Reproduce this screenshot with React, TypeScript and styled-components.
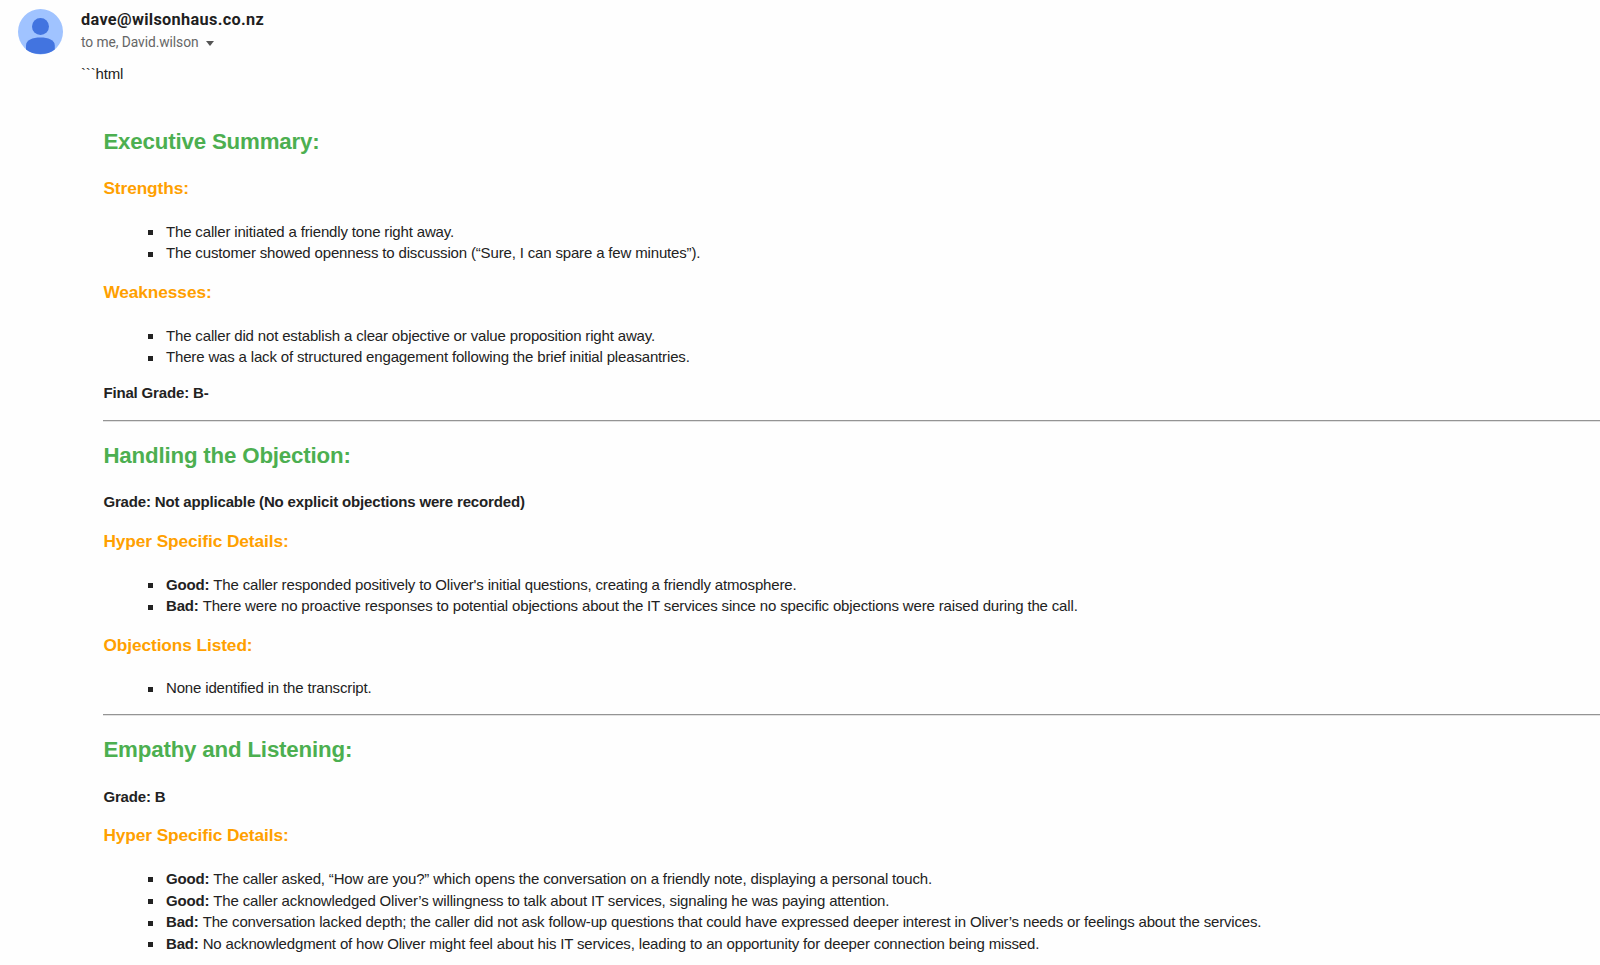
import React from 'react';
import styled, { createGlobalStyle } from 'styled-components';

const GlobalStyle = createGlobalStyle`
  * {
    box-sizing: border-box;
  }

  body {
    margin: 0;
    background: #fefefe;
    overflow: hidden;
  }
`;

const Message = styled.article`
  display: grid;
  grid-template-columns: 81px 1fr;
  height: 965px;
  overflow: hidden;
  font-family: 'Liberation Sans', Arial, sans-serif;
  font-size: 15px;
  line-height: 21.75px;
  letter-spacing: -0.16px;
  color: #222222;
  white-space: nowrap;
`;

const AvatarCell = styled.div`
  padding: 9px 0 0 18px;
`;

const Avatar = styled.svg`
  display: block;
  width: 45px;
  height: 46px;
`;

const Content = styled.div`
  min-width: 0;
`;

const Header = styled.header`
  padding-top: 9px;
  font-family: Roboto, Arial, sans-serif;
`;

const Sender = styled.h3`
  margin: 0;
  font-size: 16.3px;
  font-weight: 700;
  line-height: 22px;
  letter-spacing: 0.32px;
  color: #1f1f1f;
`;

const Recipients = styled.div`
  display: flex;
  align-items: center;
  gap: 7px;
  height: 23px;
  font-size: 13.8px;
  letter-spacing: -0.07px;
  color: #666666;
`;

const Caret = styled.span`
  margin-top: 2px;
  border: 4px solid transparent;
  border-top: 5px solid #555555;
  border-bottom: 0;
`;

const CodeFence = styled.div`
  margin-top: 9px;
`;

const Report = styled.div`
  padding: 40px 0 0 22.4px;
`;

const Section = styled.section`
  & + & {
    margin-top: 15px;
    border-top: 1px solid #949494;
    box-shadow: inset 0 1px 0 #e2e2e2;
    padding-top: 18px;
  }
`;

const SectionTitle = styled.h2`
  margin: 0;
  font-size: 22.3px;
  line-height: 33px;
  letter-spacing: -0.18px;
  color: #4caf50;
`;

const Subtitle = styled.h3`
  margin: 16px 0 20.4px;
  font-size: 17.3px;
  line-height: 24px;
  letter-spacing: -0.09px;
  color: #ffa000;

  ${SectionTitle} + & {
    margin-top: 18.6px;
  }
`;

const Grade = styled.p`
  margin: 14px 0 0;
  font-weight: 700;

  ${SectionTitle} + & {
    margin-top: 19.4px;
  }

  &:last-child {
    margin-bottom: 16.2px;
  }
`;

const Points = styled.ul`
  margin: 0;
  padding: 0 0 0 62.6px;
  list-style: none;
`;

const Point = styled.li`
  display: flex;
  align-items: center;
  margin-left: -18px;

  &::before {
    content: '';
    width: 5px;
    height: 5px;
    margin: 2px 13px 0 0;
    background: #222222;
  }
`;

interface PointData {
  label?: string;
  text: string;
}

const PointList: React.FC<{ items: PointData[] }> = ({ items }) => (
  <Points>
    {items.map((item) => (
      <Point key={item.text}>
        <span>
          {item.label && <strong>{item.label}: </strong>}
          {item.text}
        </span>
      </Point>
    ))}
  </Points>
);

const strengths: PointData[] = [
  { text: 'The caller initiated a friendly tone right away.' },
  { text: 'The customer showed openness to discussion (“Sure, I can spare a few minutes”).' }
];

const weaknesses: PointData[] = [
  { text: 'The caller did not establish a clear objective or value proposition right away.' },
  { text: 'There was a lack of structured engagement following the brief initial pleasantries.' }
];

const objectionDetails: PointData[] = [
  { label: 'Good', text: "The caller responded positively to Oliver's initial questions, creating a friendly atmosphere." },
  { label: 'Bad', text: 'There were no proactive responses to potential objections about the IT services since no specific objections were raised during the call.' }
];

const objections: PointData[] = [
  { text: 'None identified in the transcript.' }
];

const empathyDetails: PointData[] = [
  { label: 'Good', text: 'The caller asked, “How are you?” which opens the conversation on a friendly note, displaying a personal touch.' },
  { label: 'Good', text: 'The caller acknowledged Oliver’s willingness to talk about IT services, signaling he was paying attention.' },
  { label: 'Bad', text: 'The conversation lacked depth; the caller did not ask follow-up questions that could have expressed deeper interest in Oliver’s needs or feelings about the services.' },
  { label: 'Bad', text: 'No acknowledgment of how Oliver might feel about his IT services, leading to an opportunity for deeper connection being missed.' }
];

const App: React.FC = () => (
  <>
    <GlobalStyle />
    <Message>
      <AvatarCell>
        <Avatar viewBox="0 0 45 46" aria-hidden="true">
          <ellipse cx="22.5" cy="22.8" rx="22.5" ry="22.8" fill="#a0c3ff" />
          <circle cx="22.5" cy="17.5" r="8.5" fill="#4274e0" />
          <path d="M8 36.5C8 31 14.5 28.5 22.4 28.5S36.8 31 36.8 36.5V40.5C33 43.6 28 45.1 22.4 45.1S11.8 43.6 8 40.5Z" fill="#4274e0" />
        </Avatar>
      </AvatarCell>

      <Content>
        <Header>
          <Sender>dave@wilsonhaus.co.nz</Sender>
          <Recipients>
            to me, David.wilson
            <Caret />
          </Recipients>
        </Header>

        <CodeFence>```html</CodeFence>

        <Report>
          <Section>
            <SectionTitle>Executive Summary:</SectionTitle>
            <Subtitle>Strengths:</Subtitle>
            <PointList items={strengths} />
            <Subtitle>Weaknesses:</Subtitle>
            <PointList items={weaknesses} />
            <Grade>Final Grade: B-</Grade>
          </Section>

          <Section>
            <SectionTitle>Handling the Objection:</SectionTitle>
            <Grade>Grade: Not applicable (No explicit objections were recorded)</Grade>
            <Subtitle>Hyper Specific Details:</Subtitle>
            <PointList items={objectionDetails} />
            <Subtitle>Objections Listed:</Subtitle>
            <PointList items={objections} />
          </Section>

          <Section>
            <SectionTitle>Empathy and Listening:</SectionTitle>
            <Grade>Grade: B</Grade>
            <Subtitle>Hyper Specific Details:</Subtitle>
            <PointList items={empathyDetails} />
          </Section>
        </Report>
      </Content>
    </Message>
  </>
);

export default App;
